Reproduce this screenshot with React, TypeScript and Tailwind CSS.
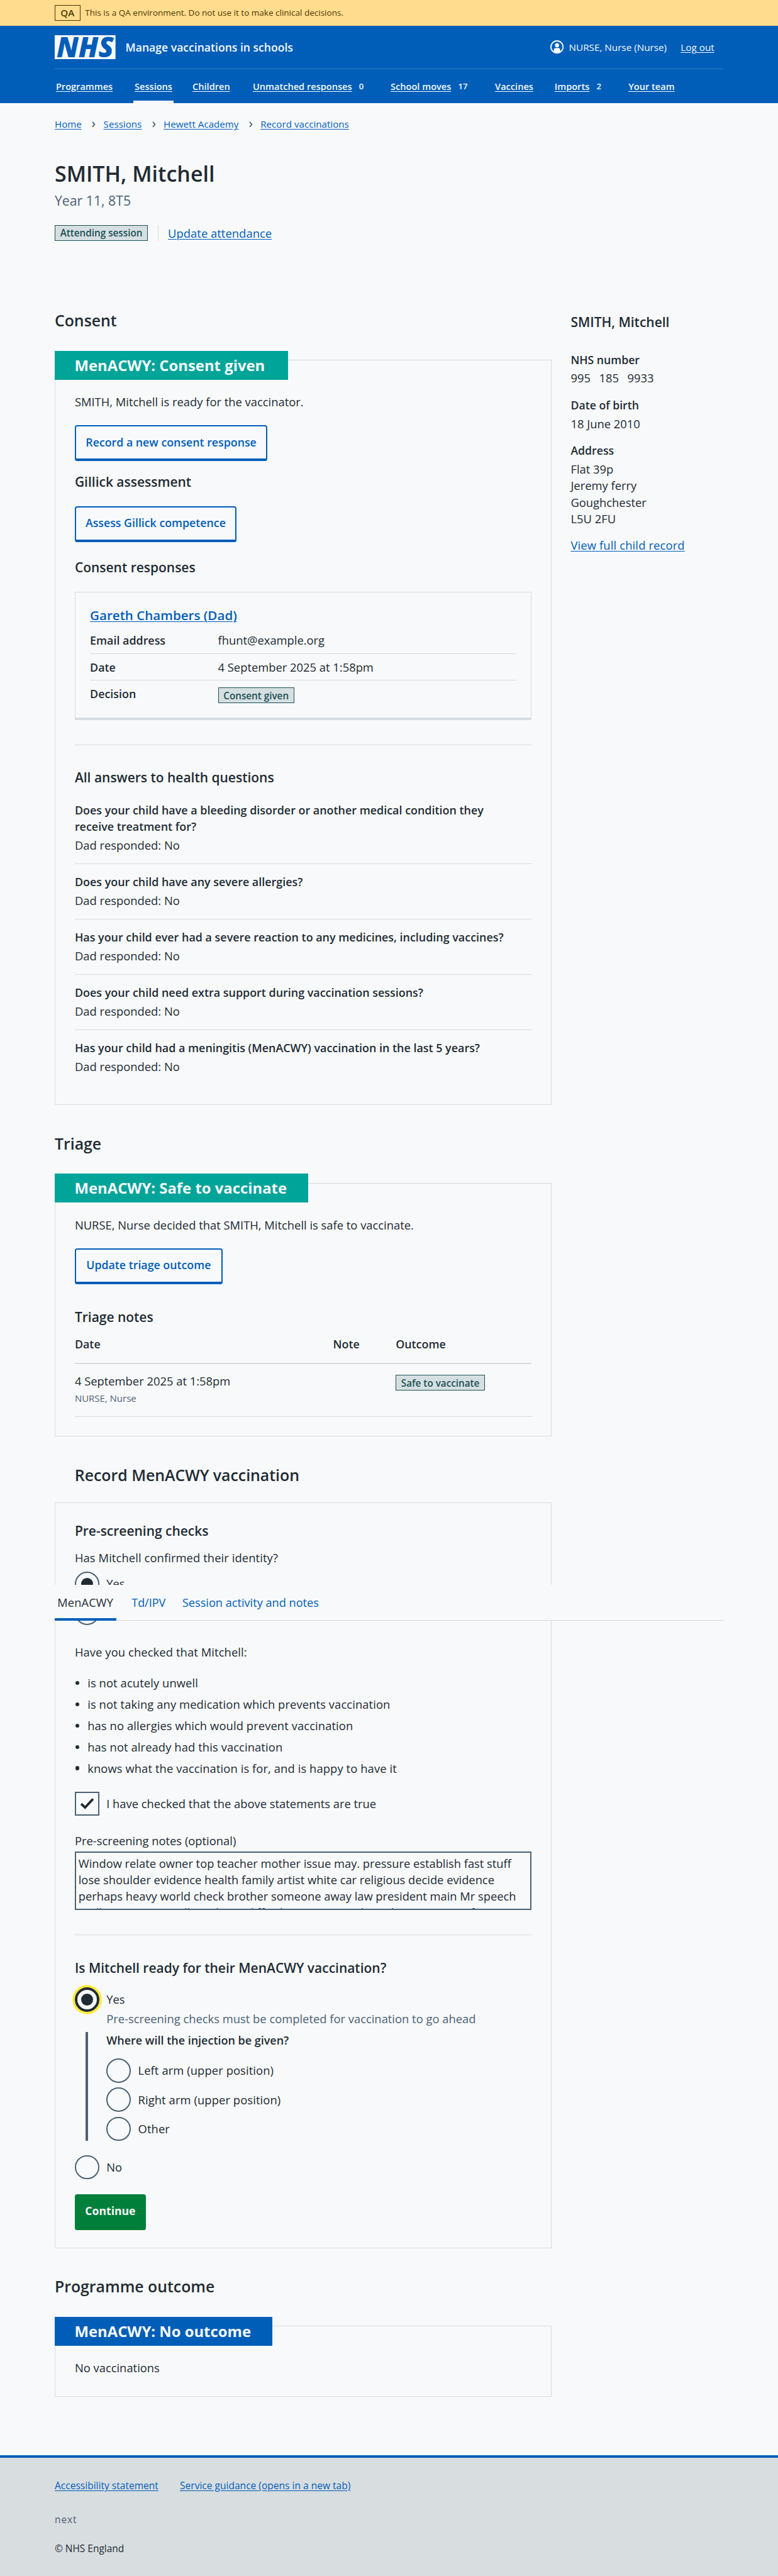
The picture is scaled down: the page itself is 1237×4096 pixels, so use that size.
import type { ReactNode } from "react";

const navItems = [
  { label: "Programmes", width: "w-[129.5px]" },
  { label: "Sessions", width: "w-[95.2px]", current: true },
  { label: "Children", width: "w-[99.3px]" },
  { label: "Unmatched responses", width: "w-[226.7px]", count: 0 },
  { label: "School moves", width: "w-[171.8px]", count: 17 },
  { label: "Vaccines", width: "w-[98px]" },
  { label: "Imports", width: "w-[121.5px]", count: 2 },
  { label: "Your team", width: "w-[90px]" },
];

const questions = [
  "Does your child have a bleeding disorder or another medical condition they receive treatment for?",
  "Does your child have any severe allergies?",
  "Has your child ever had a severe reaction to any medicines, including vaccines?",
  "Does your child need extra support during vaccination sessions?",
  "Has your child had a meningitis (MenACWY) vaccination in the last 5 years?",
];

const checks = [
  "is not acutely unwell",
  "is not taking any medication which prevents vaccination",
  "has no allergies which would prevent vaccination",
  "has not already had this vaccination",
  "knows what the vaccination is for, and is happy to have it",
];

function H2({ children, className = "" }: { children: ReactNode; className?: string }) {
  return <h2 className={`text-[25.7px] leading-[34px] font-semibold ${className}`}>{children}</h2>;
}

function H3({ children, className = "" }: { children: ReactNode; className?: string }) {
  return <h3 className={`text-[21.7px] leading-[30px] font-semibold ${className}`}>{children}</h3>;
}

function Hr({ className = "" }: { className?: string }) {
  return <hr className={`border-0 border-t border-[#d8dde0] ${className}`} />;
}

function Tag({ children }: { children: ReactNode }) {
  return (
    <span className="inline-flex h-[26px] items-center whitespace-nowrap border border-[#1d4f53] bg-[#d5dfe2] px-[8px] text-[15.8px] font-semibold text-[#1d4f53]">
      {children}
    </span>
  );
}

function SecondaryButton({ children, className = "" }: { children: ReactNode; className?: string }) {
  return (
    <button
      className={`flex h-[59px] items-center justify-center rounded-[4px] border-[2.1px] border-b-[4.15px] border-[#005eb8] pb-[2px] text-[18.4px] font-semibold text-[#005eb8] ${className}`}
    >
      {children}
    </button>
  );
}

function Card({ children, className = "" }: { children: ReactNode; className?: string }) {
  return <section className={`w-[817px] border border-[#d8dde0] px-[32px] ${className}`}>{children}</section>;
}

function CardLabel({ children, className = "" }: { children: ReactNode; className?: string }) {
  return (
    <h3
      className={`-ml-[33px] -mt-[16px] flex h-[48px] items-center whitespace-nowrap pl-[32.5px] text-[24.7px] font-bold text-[#f8f9fb] ${className}`}
    >
      {children}
    </h3>
  );
}

function Radio({ label, checked = false, focused = false }: { label?: string; checked?: boolean; focused?: boolean }) {
  return (
    <label className="flex h-[40px] items-center gap-[12px]">
      <span
        className={`flex size-[40px] items-center justify-center rounded-full ${
          focused
            ? "border-[4.15px] border-[#212b32] ring-[4px] ring-[#ffeb3b]"
            : "border-[2.1px] border-[#4c6272]"
        }`}
      >
        {checked && <span className="size-[20px] rounded-full bg-[#212b32]" />}
      </span>
      {label && <span className="leading-[27px]">{label}</span>}
    </label>
  );
}

function SummaryRow({ label, children, last = false }: { label: string; children: ReactNode; last?: boolean }) {
  return (
    <div className={`flex h-[44px] border-b pt-[8px] leading-[27px] ${last ? "border-transparent" : "border-[#d8dde0]"}`}>
      <dt className="w-[210.5px] text-[18.5px] font-semibold">{label}</dt>
      <dd>{children}</dd>
    </div>
  );
}

function Banner() {
  return (
    <div className="flex h-[42px] items-center gap-[8px] bg-[#ffdc8e] px-[90px] text-[14px] text-[#4d3800]">
      <span className="flex h-[26px] w-[42px] items-center justify-center border border-[#4d3800] text-[15.7px] leading-[24px] font-semibold">
        QA
      </span>
      <span>This is a QA environment. Do not use it to make clinical decisions.</span>
    </div>
  );
}

function Header() {
  return (
    <header className="h-[128px] bg-[#005eb8] px-[90px] text-[#f8f9fb]">
      <div className="flex h-[72px] items-center border-b border-[#337ec6]">
        <svg width="100" height="40" viewBox="0 0 100 40" role="img" aria-label="NHS">
          <rect width="100" height="40" fill="#f8f9fb" />
          <text
            x="3"
            y="36.2"
            fontFamily="Open Sans"
            fontWeight="800"
            fontStyle="italic"
            fontSize="45.5"
            fill="#005eb8"
            textLength="94"
            lengthAdjust="spacingAndGlyphs"
          >
            NHS
          </text>
        </svg>
        <span className="ml-[16.5px] text-[18.2px] font-semibold">Manage vaccinations in schools</span>
        <div className="ml-auto flex w-[285px] items-center text-[15.8px]">
          <svg width="22" height="22" viewBox="0 0 22 22" className="mr-[9px] shrink-0">
            <circle cx="11" cy="11" r="10" fill="none" stroke="#f8f9fb" strokeWidth="1.9" />
            <circle cx="11" cy="8.2" r="3.4" fill="#f8f9fb" />
            <path d="M5.6 19.4v-2.6a4 4 0 0 1 4-4h2.8a4 4 0 0 1 4 4v2.6A10 10 0 0 1 5.6 19.4z" fill="#f8f9fb" />
          </svg>
          <span className="w-[184px] shrink-0 whitespace-nowrap font-medium">NURSE, Nurse (Nurse)</span>
          <a className="whitespace-nowrap font-medium underline underline-offset-[2px]">Log out</a>
        </div>
      </div>
      <nav className="flex h-[56px]">
        {navItems.map((item) => (
          <div key={item.label} className={`flex shrink-0 items-start ${item.width}`}>
            <div
              className={`flex h-[56px] items-center whitespace-nowrap border-b-[4.15px] px-[2px] pt-[3px] text-[15.1px] font-semibold ${
                item.current ? "border-[#f8f9fb]" : "border-transparent"
              }`}
            >
              <a className="underline underline-offset-[2px]">{item.label}</a>
              {item.count !== undefined && <span className="ml-[11.5px] text-[13.5px]">{item.count}</span>}
            </div>
          </div>
        ))}
      </nav>
    </header>
  );
}

function Chevron() {
  return (
    <svg width="6" height="10" viewBox="0 0 6 10" className="ml-[17px] mr-[13px]">
      <path d="M1 0.8L4.6 5L1 9.2" fill="none" stroke="#4c6272" strokeWidth="1.8" />
    </svg>
  );
}

function Breadcrumb() {
  return (
    <nav className="mt-[23px] flex h-[24px] items-center text-[15.7px] leading-[24px] text-[#005eb8]">
      <a className="underline underline-offset-[2px]">Home</a>
      <Chevron />
      <a className="underline underline-offset-[2px]">Sessions</a>
      <Chevron />
      <a className="underline underline-offset-[2px]">Hewett Academy</a>
      <Chevron />
      <a className="underline underline-offset-[2px]">Record vaccinations</a>
    </nav>
  );
}

function ConsentCard() {
  return (
    <Card className="mt-[48px] h-[1226px]">
      <CardLabel className="w-[384px] bg-[#00a499]">MenACWY: Consent given</CardLabel>
      <p className="mt-[23px]">SMITH, Mitchell is ready for the vaccinator.</p>
      <SecondaryButton className="mt-[25px] w-[317px]">Record a new consent response</SecondaryButton>
      <H3 className="mt-[19px]">Gillick assessment</H3>
      <SecondaryButton className="mt-[25px] w-[266px]">Assess Gillick competence</SecondaryButton>
      <H3 className="mt-[27px]">Consent responses</H3>
      <div className="mt-[25px] h-[211px] border border-b-[4.15px] border-[#d8dde0] px-[24px] pt-[22.6px]">
        <h4 className="text-[21.3px] leading-[30px] font-semibold text-[#005eb8]">
          <a className="underline decoration-[1.5px] underline-offset-[2px]">Gareth Chambers (Dad)</a>
        </h4>
        <dl className="mt-[4.6px]">
          <SummaryRow label="Email address">fhunt@example.org</SummaryRow>
          <SummaryRow label="Date">4 September 2025 at 1:58pm</SummaryRow>
          <SummaryRow label="Decision" last>
            <div className="mt-[3px] flex">
              <Tag>Consent given</Tag>
            </div>
          </SummaryRow>
        </dl>
      </div>
      <Hr className="mt-[40px]" />
      <H3 className="mt-[39px]">All answers to health questions</H3>
      <dl className="mt-[8.7px]">
        {questions.map((question, i) => (
          <div
            key={question}
            className={`pb-[16px] pt-[16px] ${i < questions.length - 1 ? "border-b border-[#d8dde0]" : ""}`}
          >
            <dt className="w-[730px] text-[18.55px] font-semibold">{question}</dt>
            <dd className="mt-[4px]">Dad responded: No</dd>
          </div>
        ))}
      </dl>
    </Card>
  );
}

function TriageCard() {
  return (
    <Card className="mt-[47px] h-[418px]">
      <CardLabel className="w-[417px] bg-[#00a499]">MenACWY: Safe to vaccinate</CardLabel>
      <p className="mt-[23px]">NURSE, Nurse decided that SMITH, Mitchell is safe to vaccinate.</p>
      <SecondaryButton className="mt-[25px] w-[243px]">Update triage outcome</SecondaryButton>
      <H3 className="mt-[39px]">Triage notes</H3>
      <div className="mt-[16.3px] grid grid-cols-[425px_103px_1fr] border-b-[2.1px] border-[#d8dde0] pb-[17px] text-[18.5px] font-semibold">
        <span>Date</span>
        <span>Note</span>
        <span>Outcome</span>
      </div>
      <div className="grid grid-cols-[425px_103px_1fr] border-b border-[#d8dde0] pb-[17px] pt-[15px]">
        <div>
          <p>4 September 2025 at 1:58pm</p>
          <p className="mt-[3px] text-[15.5px] leading-[24px] text-[#4c6272]">NURSE, Nurse</p>
        </div>
        <span />
        <div className="mt-[3px] flex">
          <Tag>Safe to vaccinate</Tag>
        </div>
      </div>
    </Card>
  );
}

function RecordCard() {
  return (
    <Card className="mt-[28px] h-[1227px] pt-[31px]">
      <H3>Pre-screening checks</H3>
      <p className="mt-[16px] tracking-[0.1px]">Has Mitchell confirmed their identity?</p>
      <div className="mt-[9px] flex flex-col gap-[8px]">
        <Radio label="Yes" checked />
        <Radio />
      </div>
      <p className="mt-[31px] tracking-[0.1px]">Have you checked that Mitchell:</p>
      <ul className="mt-[24px] flex flex-col gap-[8px] tracking-[0.1px]">
        {checks.map((check) => (
          <li key={check} className="flex items-center gap-[13.5px]">
            <span className="ml-[1px] size-[6.5px] rounded-full bg-[#212b32]" />
            {check}
          </li>
        ))}
      </ul>
      <label className="mt-[25px] flex h-[40px] items-center gap-[12px]">
        <span className="flex size-[40px] items-center justify-center border-[2.1px] border-[#4c6272]">
          <svg width="24" height="20" viewBox="0 0 24 20">
            <path d="M2.2 10.6L8.6 16.6L21.6 2.6" fill="none" stroke="#212b32" strokeWidth="4" />
          </svg>
        </span>
        <span>I have checked that the above statements are true</span>
      </label>
      <p className="mt-[27px]">Pre-screening notes (optional)</p>
      <div className="mt-[5px] h-[96px] overflow-hidden whitespace-nowrap border-[2.1px] border-[#4c6272] px-[4px] pt-[4px] text-[18.95px] leading-[26.7px]">
        Window relate owner top teacher mother issue may. pressure establish fast stuff
        <br />
        lose shoulder evidence health family artist white car religious decide evidence
        <br />
        perhaps heavy world check brother someone away law president main Mr speech
        <br />
        really size many really make so difficult improve anything those century of
      </div>
      <Hr className="mt-[40px]" />
      <H3 className="mt-[39px]">Is Mitchell ready for their MenACWY vaccination?</H3>
      <div className="mt-[17px]">
        <Radio label="Yes" checked focused />
        <p className="-mt-[2px] ml-[52px] text-[#4c6272]">
          Pre-screening checks must be completed for vaccination to go ahead
        </p>
        <div className="ml-[18px] mt-[9px] h-[179px] border-l-[4.15px] border-[#4c6272] pl-[30px]">
          <p className="-mt-[1px] text-[18.6px] font-semibold">Where will the injection be given?</p>
          <div className="mt-[17px] flex flex-col gap-[8px] tracking-[0.1px]">
            <Radio label="Left arm (upper position)" />
            <Radio label="Right arm (upper position)" />
            <Radio label="Other" />
          </div>
        </div>
        <div className="mt-[24px]">
          <Radio label="No" />
        </div>
      </div>
      <button className="mt-[24px] flex h-[59px] w-[117px] items-center justify-center rounded-[4px] bg-[#007f3b] pb-[4px] text-[18.2px] font-bold text-[#f8f9fb]">
        Continue
      </button>
    </Card>
  );
}

function Sidebar() {
  return (
    <aside className="w-[250px] pt-[5px]">
      <H3>SMITH, Mitchell</H3>
      <dl className="mt-[33px]">
        <dt className="text-[18.3px] font-semibold">NHS number</dt>
        <dd className="mt-[4px] flex gap-[14px]">
          <span>995</span>
          <span>185</span>
          <span>9933</span>
        </dd>
        <dt className="mt-[17px] text-[18.3px] font-semibold">Date of birth</dt>
        <dd className="mt-[4px]">18 June 2010</dd>
        <dt className="mt-[17px] text-[18.3px] font-semibold">Address</dt>
        <dd className="mt-[4px]">
          Flat 39p
          <br />
          Jeremy ferry
          <br />
          Goughchester
          <br />
          L5U 2FU
        </dd>
      </dl>
      <a className="mt-[17px] block tracking-[0.15px] text-[#005eb8] underline underline-offset-[2px]">View full child record</a>
    </aside>
  );
}

function Tabs() {
  return (
    <nav className="absolute left-[90px] top-[2608px] flex h-[59px] w-[1100px] items-stretch gap-[24px] bg-[#f8f9fb]">
      <div className="absolute inset-x-0 bottom-0 border-b border-[#d8dde0]" />
      <a className="relative flex w-[101px] items-center justify-center border-b-[4.15px] border-[#005eb8] pt-[3px] text-[18.8px] tracking-[0.2px]">MenACWY</a>
      <a className="relative flex w-[59px] items-center justify-center pb-[1px] text-[18.6px] text-[#005eb8]">Td/IPV</a>
      <a className="relative flex items-center pb-[1px] pl-[2px] text-[18.8px] text-[#005eb8]">Session activity and notes</a>
    </nav>
  );
}

function Footer() {
  return (
    <footer className="mt-[96px] h-[198.4px] border-t-[4.15px] border-[#005eb8] bg-[#d8dde0] px-[90px] pt-[34px] leading-[24px]">
      <div className="flex text-[16.1px] text-[#005eb8]">
        <a className="w-[206px] underline underline-offset-[2px]">Accessibility statement</a>
        <a className="underline underline-offset-[2px]">Service guidance (opens in a new tab)</a>
      </div>
      <p className="mt-[32px] text-[16px] tracking-[1px] text-[#4c6272]">next</p>
      <p className="mt-[24px] text-[16px]">© NHS England</p>
    </footer>
  );
}

export default function App() {
  return (
    <div className="relative w-[1280px] bg-[#f8f9fb] font-['Open_Sans','Noto_Sans',sans-serif] text-[19px] leading-[27px] text-[#212b32] [zoom:0.96640625]">
      <Banner />
      <Header />
      <main className="px-[90px]">
        <Breadcrumb />
        <h1 className="mt-[47px] text-[35.2px] leading-[44px] font-semibold">SMITH, Mitchell</h1>
        <p className="mt-[6.5px] text-[22px] leading-[32px] text-[#4c6272]">Year 11, 8T5</p>
        <div className="mt-[23.5px] flex h-[27px] items-center">
          <Tag>Attending session</Tag>
          <span className="ml-[16px] h-[27px] border-l border-[#d8dde0]" />
          <a className="ml-[16px] text-[19.1px] text-[#005eb8] underline decoration-[1.5px] underline-offset-[2px]">
            Update attendance
          </a>
        </div>
        <div className="mt-[113px] flex gap-[32px]">
          <div className="w-[817px]">
            <H2>Consent</H2>
            <ConsentCard />
            <H2 className="mt-[47px]">Triage</H2>
            <TriageCard />
            <H2 className="ml-[33px] mt-[46px]">Record MenACWY vaccination</H2>
            <RecordCard />
            <H2 className="mt-[46px]">Programme outcome</H2>
            <Card className="mt-[48px] h-[117px]">
              <CardLabel className="w-[358px] bg-[#005eb8]">MenACWY: No outcome</CardLabel>
              <p className="mt-[23px]">No vaccinations</p>
            </Card>
          </div>
          <Sidebar />
        </div>
      </main>
      <Footer />
      <Tabs />
    </div>
  );
}
